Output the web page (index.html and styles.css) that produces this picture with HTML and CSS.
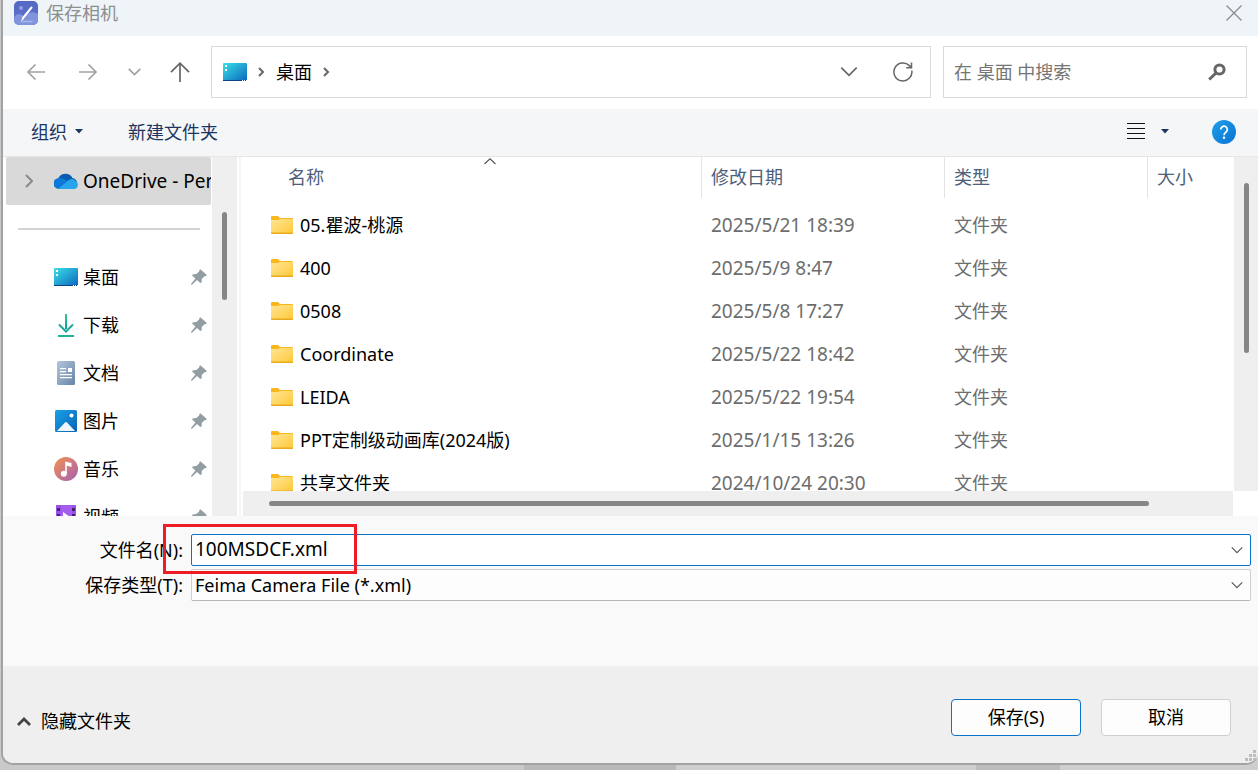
FILE: index.html
```html
<!DOCTYPE html>
<html lang="zh-CN">
<head>
    <meta charset="UTF-8">
    <meta name="viewport" content="width=device-width, initial-scale=1.0">
    <title>保存相机</title>
    <link rel="stylesheet" href="styles.css">
</head>
<body>
    <!-- shared icons -->
    <svg class="defs" width="0" height="0" aria-hidden="true">
        <defs>
            <linearGradient id="g-desktop" x1="0" y1="0" x2="1" y2="1">
                <stop offset="0" stop-color="#3be0e8"/>
                <stop offset="1" stop-color="#0a66bd"/>
            </linearGradient>
            <linearGradient id="g-folder" x1="0" y1="0" x2="1" y2="1">
                <stop offset="0" stop-color="#ffe597"/>
                <stop offset="1" stop-color="#ffc935"/>
            </linearGradient>
            <linearGradient id="g-down" x1="0" y1="0" x2="0" y2="1">
                <stop offset="0" stop-color="#35c98c"/>
                <stop offset="1" stop-color="#0f9aa0"/>
            </linearGradient>
            <linearGradient id="g-doc" x1="0" y1="0" x2="1" y2="1">
                <stop offset="0" stop-color="#b3c7dc"/>
                <stop offset="1" stop-color="#6684a5"/>
            </linearGradient>
            <linearGradient id="g-pic" x1="0" y1="0" x2="1" y2="1">
                <stop offset="0" stop-color="#1ba2e8"/>
                <stop offset="1" stop-color="#0762b4"/>
            </linearGradient>
            <linearGradient id="g-music" x1="0" y1="0" x2="1" y2="1">
                <stop offset="0" stop-color="#f4934e"/>
                <stop offset="1" stop-color="#a55fb5"/>
            </linearGradient>
            <linearGradient id="g-help" x1="0" y1="0" x2="1" y2="1">
                <stop offset="0" stop-color="#1f9fe8"/>
                <stop offset="1" stop-color="#0873d4"/>
            </linearGradient>
            <linearGradient id="g-app" x1="0" y1="0" x2="0" y2="1">
                <stop offset="0" stop-color="#5468c4"/>
                <stop offset="1" stop-color="#5e74cc"/>
            </linearGradient>
        </defs>
        <symbol id="desktop" viewBox="0 0 24 18">
            <rect width="24" height="18" rx="1" fill="url(#g-desktop)"/>
            <path d="M0 17h24v0.500a.5.5 0 0 1-.5.5H.5a.5.5 0 0 1-.5-.5z" fill="#0c4486"/>
            <path d="M2 2h2v2H2zM2 6h2v2H2zM19 17h1v1h-1zM21 17h1v1h-1zM23 17h1v1h-1z" fill="#fff"/>
        </symbol>
        <symbol id="folder" viewBox="0 0 22 18">
            <path d="M0 1a1 1 0 0 1 1-1h6l2 2h12a1 1 0 0 1 1 1v4H0z" fill="#fab71c"/>
            <path d="M0 4h7l2-1h13v14a1 1 0 0 1-1 1H1a1 1 0 0 1-1-1z" fill="url(#g-folder)"/>
            <path d="M0 16.500h22v.5a1 1 0 0 1-1 1H1a1 1 0 0 1-1-1z" fill="#eba91f"/>
        </symbol>
        <symbol id="pin" viewBox="0 0 16 16">
            <path d="M9.600 0.600 15.600 5.800 15.200 6.900 13.400 7.300 10.800 10 10.600 13.400 9.300 14 6 11 1.200 15.600 0 15.800 0.300 14.600 4.400 9.600 1.200 6.600 1.500 5.400 5.300 5 8.200 2.500 8.500 0.800z" fill="#939da4"/>
        </symbol>
        <symbol id="chevron-down" viewBox="0 0 16 10">
            <path d="M1 1.500 8 8.500 15 1.500" fill="none" stroke="currentColor" stroke-width="1.500"/>
        </symbol>
        <symbol id="chevron-right" viewBox="0 0 8 14">
            <path d="M1 1 7 7 1 13" fill="none" stroke="currentColor" stroke-width="2"/>
        </symbol>
        <symbol id="crumb-right" viewBox="0 0 7 10">
            <path d="M1 1 5 5 1 9" fill="none" stroke="currentColor" stroke-width="2"/>
        </symbol>
    </svg>

    <div class="dialog">
        <header class="titlebar">
            <svg class="app-icon" width="24" height="24" viewBox="0 0 24 24">
                <rect width="24" height="24" rx="5" fill="url(#g-app)"/>
                <path d="M0 16c3-4 7-4 10 0 4-5 9-6 14-3v6a5 5 0 0 1-5 5H5a5 5 0 0 1-5-5z" fill="#8093dc"/>
                <circle cx="7" cy="7" r="2" fill="#8fa0e0"/>
                <path d="M17.500 6.500 9 17" stroke="#fff" stroke-width="2" stroke-linecap="round"/>
                <path d="M6.500 20.500h12" stroke="#aab7ea" stroke-width="1.500"/>
                <path d="M8.500 16.500 7 20l3-2z" fill="#fff"/>
            </svg>
            <h1 class="title">保存相机</h1>
            <button class="icon-button close" type="button" aria-label="关闭">
                <svg width="16" height="16" viewBox="0 0 16 16"><path d="M.5.5l15 15M15.500.5l-15 15" stroke="#8a8c8d" stroke-width="1.300"/></svg>
            </button>
        </header>

        <nav class="navbar">
            <button class="icon-button nav-button muted" type="button" aria-label="后退">
                <svg width="18" height="16" viewBox="0 0 18 16"><path d="M18 8H1M8.500.5 1 8l7.500 7.500" fill="none" stroke="currentColor" stroke-width="1.600"/></svg>
            </button>
            <button class="icon-button nav-button muted" type="button" aria-label="前进">
                <svg width="18" height="16" viewBox="0 0 18 16"><path d="M0 8h17M9.500.5 17 8l-7.500 7.500" fill="none" stroke="currentColor" stroke-width="1.600"/></svg>
            </button>
            <button class="icon-button nav-button narrow muted" type="button" aria-label="最近位置">
                <svg width="13" height="8" viewBox="0 0 13 8"><path d="M.7.8 6.500 6.600 12.300.8" fill="none" stroke="currentColor" stroke-width="1.800"/></svg>
            </button>
            <button class="icon-button nav-button" type="button" aria-label="上移">
                <svg width="20" height="20" viewBox="0 0 20 20"><path d="M10 20V1.500M1 10.200l9-9 9 9" fill="none" stroke="currentColor" stroke-width="1.700"/></svg>
            </button>
            <div class="address">
                <svg width="24" height="18"><use href="#desktop"/></svg>
                <svg class="crumb-arrow" width="7" height="10"><use href="#crumb-right"/></svg>
                <a class="crumb" href="#">桌面</a>
                <svg class="crumb-arrow" width="7" height="10"><use href="#crumb-right"/></svg>
                <button class="icon-button address-button push" type="button" aria-label="历史记录">
                    <svg width="18" height="11"><use href="#chevron-down"/></svg>
                </button>
                <button class="icon-button address-button" type="button" aria-label="刷新">
                    <svg width="20" height="20" viewBox="0 0 20 20"><path d="M18.800 8.500A9 9 0 1 1 16.300 3.600l2 2M18.500.5v5.300h-5.300" fill="none" stroke="currentColor" stroke-width="1.500"/></svg>
                </button>
            </div>
            <div class="search">
                <input class="search-input" type="text" aria-label="搜索" placeholder="在 桌面 中搜索">
                <button class="icon-button" type="button" aria-label="搜索">
                    <svg width="18" height="18" viewBox="0 0 18 18"><circle cx="11.500" cy="6.500" r="4.600" fill="none" stroke="currentColor" stroke-width="3"/><path d="M8 10 1.200 16.500" stroke="currentColor" stroke-width="3"/></svg>
                </button>
            </div>
        </nav>

        <div class="toolbar">
            <button class="tool" type="button">组织
                <svg width="8" height="5" viewBox="0 0 8 5"><path d="M0 0h8L4 4.500z" fill="currentColor"/></svg>
            </button>
            <button class="tool" type="button">新建文件夹</button>
            <button class="tool view" type="button" aria-label="更改视图">
                <svg width="18" height="17" viewBox="0 0 18 17" shape-rendering="crispEdges"><path d="M0 0h18v1H0zM0 5h18v1H0zM0 10h18v1H0zM0 15h18v1H0z" fill="#111"/></svg>
                <svg width="8" height="5" viewBox="0 0 8 5"><path d="M0 0h8L4 4.500z" fill="currentColor"/></svg>
            </button>
            <button class="icon-button help" type="button" aria-label="帮助">
                <svg width="24" height="24" viewBox="0 0 24 24"><circle cx="12" cy="12" r="12" fill="url(#g-help)"/><path d="M8.700 9.500a3.300 3.300 0 1 1 5.200 2.700c-1.300.9-1.900 1.500-1.900 3" fill="none" stroke="#fff" stroke-width="1.700"/><circle cx="12" cy="17.800" r="1.200" fill="#fff"/></svg>
            </button>
        </div>

        <main class="explorer">
            <aside class="sidebar">
                <ul class="places">
                    <li class="place selected">
                        <svg class="expander" width="8" height="14"><use href="#chevron-right"/></svg>
                        <span class="place-icon">
                            <svg width="24" height="16" viewBox="0 0 24 16"><path d="M5 13A5 5 0 0 1 4.500 5 8 8 0 0 1 18.500 5 6 6 0 0 1 23 9L12 14z" fill="#0a5cb0"/><path d="M4.800 16A5 5 0 0 1 5 5c3-.4 5 .5 7 2l7 4-7 5z" fill="#0c79d8"/><path d="M4 15.900 13 8.500c2-3 7-3.500 8.500-.5A4.200 4.200 0 0 1 20 16H5.500z" fill="#28a4ea"/></svg>
                        </span>
                        <span class="place-name latin">OneDrive - Personal</span>
                    </li>
                    <li class="divider"></li>
                    <li class="place">
                        <span class="place-icon"><svg width="24" height="18"><use href="#desktop"/></svg></span>
                        <span class="place-name">桌面</span>
                        <svg class="pin" width="16" height="16"><use href="#pin"/></svg>
                    </li>
                    <li class="place">
                        <span class="place-icon">
                            <svg width="18" height="24" viewBox="0 0 18 24"><path d="M8 1h2v15H8z" fill="url(#g-down)"/><path d="M2 11.500 9 18.500 16 11.500" fill="none" stroke="#1aa897" stroke-width="2"/><path d="M1 22h16v2H1z" fill="#22b293"/></svg>
                        </span>
                        <span class="place-name">下载</span>
                        <svg class="pin" width="16" height="16"><use href="#pin"/></svg>
                    </li>
                    <li class="place">
                        <span class="place-icon">
                            <svg width="18" height="24" viewBox="0 0 18 24"><rect width="18" height="24" rx="1.500" fill="url(#g-doc)"/><path d="M3 7h6v1.300H3zM3 10h6v1.300H3zM3 13h12v1.300H3zM3 16h12v1.300H3zM11 7h4v4h-4z" fill="#fff"/></svg>
                        </span>
                        <span class="place-name">文档</span>
                        <svg class="pin" width="16" height="16"><use href="#pin"/></svg>
                    </li>
                    <li class="place">
                        <span class="place-icon">
                            <svg width="22" height="22" viewBox="0 0 22 22"><rect width="22" height="22" rx="1.500" fill="url(#g-pic)"/><path d="M2 21 10 12.500a1.500 1.500 0 0 1 2 0L20 21z" fill="#eef6fc"/><circle cx="16.500" cy="5.500" r="2" fill="#fff"/></svg>
                        </span>
                        <span class="place-name">图片</span>
                        <svg class="pin" width="16" height="16"><use href="#pin"/></svg>
                    </li>
                    <li class="place">
                        <span class="place-icon">
                            <svg width="24" height="24" viewBox="0 0 24 24"><circle cx="12" cy="12" r="12" fill="url(#g-music)"/><circle cx="9.800" cy="16.800" r="3" fill="#fff"/><path d="M11.200 4.500 17.500 6v4l-4.700-1.200v8h-1.600z" fill="#fff"/></svg>
                        </span>
                        <span class="place-name">音乐</span>
                        <svg class="pin" width="16" height="16"><use href="#pin"/></svg>
                    </li>
                    <li class="place">
                        <span class="place-icon">
                            <svg width="20" height="24" viewBox="0 0 20 24"><rect width="20" height="24" rx="1" fill="#a35cec"/><path d="M0 1a1 1 0 0 1 1-1h4v24H0zM16 0h3a1 1 0 0 1 1 1v23h-4z" fill="#9b50e6"/><path d="M1 3h3v3H1zM1 9h3v3H1zM16 3h3v3h-3zM16 9h3v3h-3z" fill="#47206f"/><path d="M7 7v10l7-5z" fill="#fff"/></svg>
                        </span>
                        <span class="place-name">视频</span>
                        <svg class="pin" width="16" height="16"><use href="#pin"/></svg>
                    </li>
                </ul>
                <div class="scrollbar vertical side-scroll"><div class="thumb"></div></div>
            </aside>

            <section class="files">
                <div class="file-area">
                    <table class="file-table">
                        <colgroup>
                            <col class="col-name">
                            <col class="col-date">
                            <col class="col-type">
                            <col>
                        </colgroup>
                        <thead>
                            <tr>
                                <th class="name-head">名称
                                    <svg class="sort" width="12" height="7" viewBox="0 0 12 7"><path d="M.5 6 6 .8 11.500 6" fill="none" stroke="#555" stroke-width="1.100"/></svg>
                                </th>
                                <th>修改日期</th>
                                <th>类型</th>
                                <th>大小</th>
                            </tr>
                        </thead>
                        <tbody>
                            <tr><td class="name"><svg width="22" height="18"><use href="#folder"/></svg>05.瞿波-桃源</td><td class="latin">2025/5/21 18:39</td><td>文件夹</td><td></td></tr>
                            <tr><td class="name"><svg width="22" height="18"><use href="#folder"/></svg>400</td><td class="latin">2025/5/9 8:47</td><td>文件夹</td><td></td></tr>
                            <tr><td class="name"><svg width="22" height="18"><use href="#folder"/></svg>0508</td><td class="latin">2025/5/8 17:27</td><td>文件夹</td><td></td></tr>
                            <tr><td class="name"><svg width="22" height="18"><use href="#folder"/></svg>Coordinate</td><td class="latin">2025/5/22 18:42</td><td>文件夹</td><td></td></tr>
                            <tr><td class="name"><svg width="22" height="18"><use href="#folder"/></svg>LEIDA</td><td class="latin">2025/5/22 19:54</td><td>文件夹</td><td></td></tr>
                            <tr><td class="name"><svg width="22" height="18"><use href="#folder"/></svg>PPT定制级动画库(2024版)</td><td class="latin">2025/1/15 13:26</td><td>文件夹</td><td></td></tr>
                            <tr><td class="name"><svg width="22" height="18"><use href="#folder"/></svg>共享文件夹</td><td class="latin">2024/10/24 20:30</td><td>文件夹</td><td></td></tr>
                        </tbody>
                    </table>
                    <div class="scrollbar vertical file-scroll"><div class="thumb"></div></div>
                </div>
                <div class="scrollbar horizontal"><div class="thumb"></div></div>
            </section>
        </main>

        <form class="save-form">
            <div class="field">
                <label for="file-name">文件名(N):</label>
                <div class="control">
                    <input class="box file-name latin" id="file-name" type="text" value="100MSDCF.xml">
                    <svg class="arrow" width="12" height="8"><use href="#chevron-down"/></svg>
                </div>
            </div>
            <div class="field">
                <label for="file-type">保存类型(T):</label>
                <div class="control">
                    <select class="box file-type" id="file-type">
                        <option>Feima Camera File (*.xml)</option>
                    </select>
                    <svg class="arrow" width="12" height="8"><use href="#chevron-down"/></svg>
                </div>
            </div>
            <div class="highlight"></div>
        </form>

        <footer class="footer">
            <button class="hide-folders" type="button">
                <svg width="14" height="9" viewBox="0 0 14 9"><path d="M1 8 7 2 13 8" fill="none" stroke="#444" stroke-width="2.800"/></svg>
                隐藏文件夹
            </button>
            <div class="actions">
                <button class="button primary" type="button">保存(S)</button>
                <button class="button" type="button">取消</button>
            </div>
            <svg class="grip" width="11" height="11" viewBox="0 0 11 11"><path d="M8 0h3v3H8zM4 4h3v3H4zM8 4h3v3H8zM0 8h3v3H0zM4 8h3v3H4zM8 8h3v3H8z" fill="#bdbdbd"/></svg>
        </footer>
    </div>
</body>
</html>
```
FILE: styles.css
```css
* {
    box-sizing: border-box;
}

body {
    height: 100vh;
    margin: 0;
    padding: 0 0 5px 1px;
    overflow: hidden;
    font-family: "Noto Sans", "Noto Sans CJK SC", sans-serif;
    font-size: 18px;
    line-height: 24px;
    color: #000;
    background: linear-gradient(to right, #c9c9c9 524px, #b9b9b9 524px, #b9b9b9 676px, #cecece 676px, #cecece 976px, #bcbcbc 976px, #bcbcbc 1060px, #cecece 1060px);
}

button, input, select {
    font: inherit;
    color: inherit;
}

svg {
    display: block;
    flex: none;
}

.defs {
    position: absolute;
}

.dialog {
    display: flex;
    flex-direction: column;
    height: 100%;
    border: solid #a2a2a2;
    border-width: 0 0 2px 2px;
    border-radius: 0 0 12px 12px;
    overflow: hidden;
    background: #fff;
}

.latin {
    font-size: 19px;
}

.icon-button {
    display: flex;
    align-items: center;
    justify-content: center;
    padding: 0;
    border: none;
    background: none;
    color: #666;
}

/* title bar */
.titlebar {
    display: flex;
    flex: none;
    align-items: flex-start;
    height: 36px;
    padding: 1px 16px 0 11px;
    background: #eef4f7;
}

.title {
    margin: 0 0 0 8px;
    font-size: 18px;
    font-weight: normal;
    color: #8c8f91;
}

.close {
    height: 24px;
    margin-left: auto;
}

/* navigation */
.navbar {
    display: flex;
    flex: none;
    align-items: center;
    height: 73px;
    padding: 0 11px 2px 7px;
}

.nav-button {
    width: 52px;
    height: 40px;
}

.nav-button.narrow {
    width: 40px;
}

.muted {
    color: #a3a3a3;
}

.address, .search {
    display: flex;
    align-items: center;
    height: 52px;
    border: 1px solid #d9d9d9;
}

.address {
    flex: 1;
    margin: 0 12px 0 5px;
    padding: 0 0 0 11px;
}

.crumb {
    color: #000;
    text-decoration: none;
}

.crumb-arrow {
    margin: 0 11px;
    color: #666;
}

.address-button {
    width: 54px;
    height: 50px;
}

.push {
    margin-left: auto;
}

.search {
    width: 304px;
    padding: 0 20px 0 10px;
}

.search-input {
    flex: 1;
    min-width: 0;
    padding: 0;
    border: none;
    outline: none;
    background: none;
}

.search-input::placeholder {
    color: #757575;
    opacity: 1;
}

/* toolbar */
.toolbar {
    display: flex;
    flex: none;
    align-items: center;
    height: 48px;
    padding: 0 22px 2px 28px;
    border-bottom: 1px solid #e6e6e6;
    background: #f4f6f8;
}

.tool {
    display: flex;
    align-items: center;
    gap: 8px;
    margin-right: 45px;
    padding: 0;
    border: none;
    background: none;
    color: #1c355e;
}

.tool.view {
    gap: 16px;
    margin: 0 43px 0 auto;
}

/* explorer */
.explorer {
    display: flex;
    flex: 1;
    min-height: 0;
}

.sidebar {
    display: flex;
    flex: none;
    width: 238px;
    padding-left: 3px;
    border-right: 2px solid #f6f6f6;
    overflow: hidden;
}

.places {
    flex: 1;
    min-width: 0;
    margin: 0;
    padding: 0;
    list-style: none;
}

.place {
    display: flex;
    align-items: center;
    height: 48px;
    padding: 0 4px 0 48px;
}

.place.selected {
    padding: 0 0 0 19px;
    border-radius: 2px;
    background: #d9d9d9;
}

.expander {
    margin-right: 21px;
    color: #8a8a8a;
}

.place-icon {
    display: flex;
    flex: none;
    justify-content: center;
    width: 24px;
    margin-right: 5px;
}

.place-name {
    overflow: hidden;
    white-space: nowrap;
}

.pin {
    margin-left: auto;
}

.divider {
    height: 48px;
    padding: 23px 11px 0 12px;
}

.divider::before {
    content: "";
    display: block;
    height: 2px;
    background: #d4d4d4;
}

.scrollbar {
    flex: none;
    background: #efefef;
}

.thumb {
    border-radius: 3px;
    background: #868686;
}

.vertical {
    width: 25px;
}

.vertical .thumb {
    width: 5px;
    margin: 0 auto;
}

.side-scroll {
    margin: 0 2px 0 1px;
    padding-top: 55px;
}

.side-scroll .thumb {
    height: 88px;
}

.file-scroll {
    width: 24px;
    padding-top: 26px;
}

.file-scroll .thumb {
    height: 170px;
}

.horizontal {
    height: 25px;
    margin-right: 25px;
    padding: 10px 84px 0 26px;
}

.horizontal .thumb {
    height: 5px;
}

.files {
    display: flex;
    flex: 1;
    flex-direction: column;
    min-width: 0;
    padding-left: 2px;
}

.file-area {
    display: flex;
    flex: 1;
    min-height: 0;
    overflow: hidden;
}

.file-table {
    flex: 1;
    align-self: flex-start;
    table-layout: fixed;
    border-collapse: separate;
    border-spacing: 0;
    color: #6d6d6d;
}

.col-name {
    width: 459px;
}

.col-date {
    width: 243px;
}

.col-type {
    width: 203px;
}

.file-table th {
    height: 41px;
    padding: 0 0 2px 9px;
    border-right: 1px solid #e3e3e3;
    font-weight: normal;
    text-align: left;
    color: #4c607a;
}

.file-table th:last-child {
    border-right: none;
}

.file-table .name-head {
    position: relative;
    padding-left: 45px;
}

.sort {
    position: absolute;
    top: 1px;
    left: 241px;
}

.file-table td {
    height: 43px;
    padding: 0 0 0 9px;
    white-space: nowrap;
}

.file-table tbody::before {
    content: "";
    display: block;
    height: 5px;
}

.file-table .name {
    padding-left: 28px;
    color: #000;
}

.name svg {
    display: inline-block;
    margin-right: 7px;
    vertical-align: -2px;
}

/* file name and type */
.save-form {
    position: relative;
    display: flex;
    flex: none;
    flex-direction: column;
    gap: 3px;
    height: 150px;
    padding: 18px 7px 0 0;
    background: #f9f9f9;
}

.field {
    display: flex;
    align-items: center;
}

.field label {
    width: 180px;
    margin-right: 8px;
    text-align: right;
}

.control {
    position: relative;
    flex: 1;
}

.box {
    display: block;
    width: 100%;
    height: 32px;
    padding: 0 30px 0 3px;
    border: 1px solid #cfcfcf;
    border-radius: 2px;
    outline: none;
    appearance: none;
    background: #fdfdfd;
}

.file-name {
    padding-bottom: 2px;
    border-color: #0a74cc;
    background: #fff;
    font-size: 19px;
}

.file-type {
    border-bottom-color: #b8b8b8;
}

.arrow {
    position: absolute;
    top: 12px;
    right: 8px;
    color: #555;
    pointer-events: none;
}

.highlight {
    position: absolute;
    top: 8px;
    left: 160px;
    width: 194px;
    height: 50px;
    border: 3px solid #ee1c25;
    pointer-events: none;
}

/* footer */
.footer {
    position: relative;
    display: flex;
    flex: none;
    align-items: center;
    justify-content: space-between;
    height: 97px;
    padding: 5px 27px 0 14px;
    background: #efefef;
}

.hide-folders {
    display: flex;
    align-items: center;
    gap: 10px;
    padding: 8px 0 0;
    border: none;
    background: none;
}

.actions {
    display: flex;
    gap: 20px;
}

.button {
    width: 130px;
    height: 37px;
    padding: 0;
    border: 1px solid #cfcfcf;
    border-radius: 4px;
    background: #fdfdfd;
}

.button.primary {
    border-color: #0a74cc;
}

.grip {
    position: absolute;
    right: 2px;
    bottom: 2px;
}
```
